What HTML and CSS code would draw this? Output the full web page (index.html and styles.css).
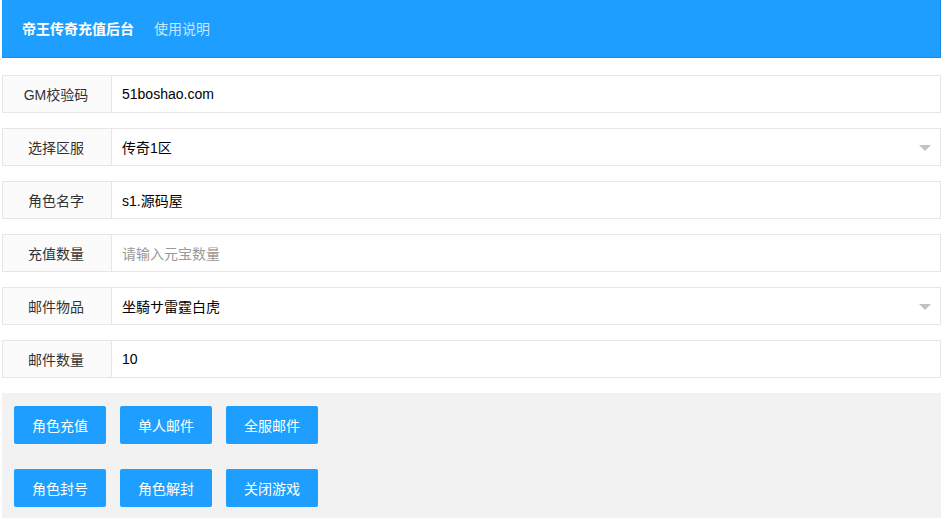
FILE: index.html
```html
<!DOCTYPE html>
<html lang="zh-CN">
<head>
<meta charset="utf-8">
<title>帝王传奇充值后台</title>
<link rel="stylesheet" href="styles.css">
</head>
<body>
<div class="page">
  <div class="header">
    <span class="logo">帝王传奇充值后台</span>
    <a class="nav-link">使用说明</a>
  </div>
  <div class="form">
    <div class="row">
      <label class="label">GM校验码</label>
      <div class="field"><span class="value">51boshao.com</span></div>
    </div>
    <div class="row">
      <label class="label">选择区服</label>
      <div class="field select"><span class="value">传奇1区</span><i class="caret"></i></div>
    </div>
    <div class="row">
      <label class="label">角色名字</label>
      <div class="field"><span class="value">s1.源码屋</span></div>
    </div>
    <div class="row">
      <label class="label">充值数量</label>
      <div class="field"><span class="placeholder">请输入元宝数量</span></div>
    </div>
    <div class="row">
      <label class="label">邮件物品</label>
      <div class="field select"><span class="value">坐騎サ雷霆白虎</span><i class="caret"></i></div>
    </div>
    <div class="row">
      <label class="label">邮件数量</label>
      <div class="field"><span class="value">10</span></div>
    </div>
  </div>
  <div class="actions">
    <div class="btn-row">
      <button class="btn">角色充值</button>
      <button class="btn">单人邮件</button>
      <button class="btn">全服邮件</button>
    </div>
    <div class="btn-row">
      <button class="btn">角色封号</button>
      <button class="btn">角色解封</button>
      <button class="btn">关闭游戏</button>
    </div>
  </div>
</div>
</body>
</html>
```
FILE: styles.css
```css
* { box-sizing: border-box; }
html, body { margin: 0; padding: 0; background: #fff; }
body {
  font-family: "Microsoft YaHei", "Liberation Sans", Arial, "Noto Sans CJK SC", sans-serif;
  font-size: 14px;
  color: #333;
}
.page {
  width: 939px;
  margin-left: 2px;
}
.header {
  height: 58px;
  background: #1E9FFF;
  border-bottom: 1px solid #1a8de3;
  border-right: 1px solid #1a8de3;
  display: flex;
  align-items: center;
  padding-left: 20px;
  padding-bottom: 1px;
}
.logo {
  color: #fff;
  font-weight: bold;
  font-size: 14px;
  margin-right: 20px;
}
.nav-link {
  color: rgba(255,255,255,0.75);
  font-size: 14px;
}
.form {
  padding-top: 17px;
  display: flex;
  flex-direction: column;
  gap: 15px;
}
.row {
  display: flex;
  height: 38px;
  border: 1px solid #e6e6e6;
}
.label {
  width: 109px;
  flex: none;
  background: #FBFBFB;
  border-right: 1px solid #e6e6e6;
  display: flex;
  align-items: center;
  justify-content: center;
  padding-right: 2px;
  padding-bottom: 1px;
  color: #333;
}
.field {
  flex: 1;
  display: flex;
  align-items: center;
  padding-left: 10px;
  padding-bottom: 1px;
  position: relative;
  background: #fff;
}
.value { color: #000; }
.placeholder { color: #999; }
.caret {
  position: absolute;
  right: 9px;
  top: 16px;
  width: 0;
  height: 0;
  border-left: 6px solid transparent;
  border-right: 6px solid transparent;
  border-top: 6px solid #c2c2c2;
}
.actions {
  margin-top: 15px;
  background: #f2f2f2;
  padding: 13px 12px 11px;
  display: flex;
  flex-direction: column;
  gap: 25px;
}
.btn-row {
  display: flex;
  gap: 14px;
}
.btn {
  width: 92px;
  height: 38px;
  border: none;
  border-radius: 2px;
  background: #1E9FFF;
  color: #fff;
  font-family: inherit;
  font-size: 14px;
  padding: 0 0 1px;
}
```
